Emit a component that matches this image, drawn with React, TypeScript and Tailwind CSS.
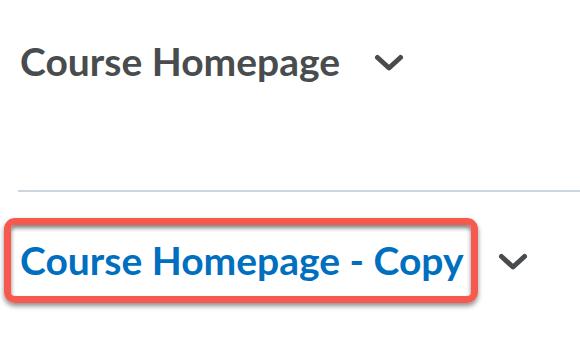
import React from "react"

function Chevron() {
  return (
    <svg width="30" height="18" viewBox="0 0 30 18" className="shrink-0">
      <polyline
        points="3.5,3.5 15,14 26.5,3.5"
        fill="none"
        stroke="#494c4e"
        strokeWidth="5"
        strokeLinecap="round"
        strokeLinejoin="round"
      />
    </svg>
  )
}

export default function App() {
  return (
    <div className="w-[580px] h-[350px] bg-white overflow-hidden font-['Lato',sans-serif]">
      {/* Original item */}
      <div className="flex items-center pt-[38px] pl-[20px]">
        <span className="text-[39px] leading-[47px] font-bold text-[#494c4e]">Course Homepage</span>
        <div className="ml-[34px] mt-[2px]">
          <Chevron />
        </div>
      </div>

      <div className="mt-[105px] ml-[18px] h-[2px] bg-[#cdd5dd]" />

      {/* Copied item, highlighted */}
      <div className="flex items-center mt-[26px] pl-[4px]">
        <span className="border-[7px] border-[#f65a4e] rounded-[11px] pl-[9px] pr-[7px] py-[12px] shadow-[0_3px_5px_rgba(0,0,0,0.45),inset_0_3px_4px_rgba(0,0,0,0.5)]">
          <span className="block text-[39px] leading-[47px] font-bold text-[#006fbf]">Course Homepage - Copy</span>
        </span>
        <div className="ml-[20px] mt-[2px]">
          <Chevron />
        </div>
      </div>
    </div>
  )
}
